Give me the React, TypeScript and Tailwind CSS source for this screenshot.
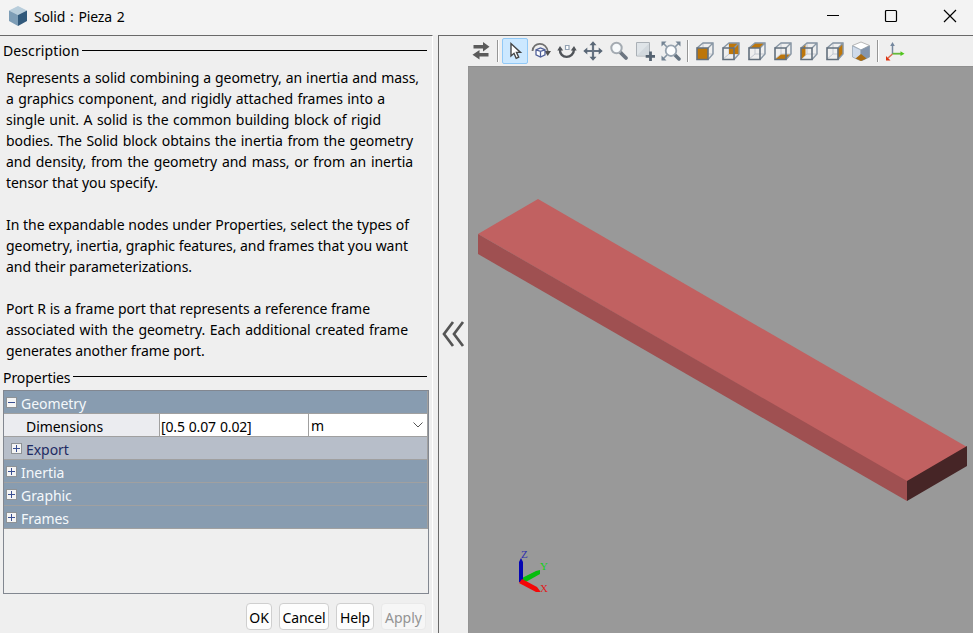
import type { ReactNode } from 'react';

const paragraphs: [string, string][][] = [
  [
    ['Represents a solid combining a geometry, an inertia and mass,', 'w-[413px]'],
    ['a graphics component, and rigidly attached frames into a', 'w-[379px]'],
    ['single unit. A solid is the common building block of rigid', 'w-[375px]'],
    ['bodies. The Solid block obtains the inertia from the geometry', 'w-[407px]'],
    ['and density, from the geometry and mass, or from an inertia', 'w-[407px]'],
    ['tensor that you specify.', 'w-[152px]'],
  ],
  [
    ['In the expandable nodes under Properties, select the types of', 'w-[403px]'],
    ['geometry, inertia, graphic features, and frames that you want', 'w-[402px]'],
    ['and their parameterizations.', 'w-[186px]'],
  ],
  [
    ['Port R is a frame port that represents a reference frame', 'w-[364px]'],
    ['associated with the geometry. Each additional created frame', 'w-[402px]'],
    ['generates another frame port.', 'w-[198px]'],
  ],
];

function Tool({ children, active = false }: { children: ReactNode; active?: boolean }) {
  return (
    <div
      className={`flex h-[26px] w-[26px] shrink-0 items-center justify-center rounded-[2px] ${
        active ? 'border border-[#91c9f7] bg-[#cce8ff]' : ''
      }`}
    >
      <svg width="20" height="20" viewBox="0 0 20 20" fill="none" className="shrink-0">
        {children}
      </svg>
    </div>
  );
}

function Separator() {
  return <div className="mx-[3px] h-[22px] w-[2px] shrink-0 border-r border-white bg-[#969696]" />;
}

function Cube({ face }: { face: string }) {
  return (
    <Tool>
      <path d="M8 2H18V13H8Z M1.5 18.5L8 13" stroke="#c3c8d0" strokeWidth="1" />
      <path d={face} fill="#bd760a" />
      <path d="M2 7L8 2H18V13L13 18.5M13 7L18 2" stroke="#8997a5" strokeWidth="1.4" />
      <path d="M2 7H13V18.5H2Z" stroke="#63707d" strokeWidth="1.6" />
    </Tool>
  );
}

function Toolbar() {
  return (
    <div className="flex h-[30px] items-center pl-[29px]">
      <Tool>
        <path d="M2.5 4h9.5V1l6.500 4.700-6.500 4.700V7.600H2.5zM17.500 12H8.500V9L1.500 13.800l7 4.700V15.600h9z" fill="#5b5b5b" />
      </Tool>
      <Separator />
      <Tool active>
        <path d="M6 2.500V15l3-2.700 2.200 5 2.500-1.100-2.200-4.800h4z" fill="#fff" stroke="#454545" strokeWidth="1.4" />
      </Tool>
      <Tool>
        <path d="M1.500 10C2 .5 15.500 0 17 11" stroke="#707070" strokeWidth="1.800" />
        <path d="M13.500 10h6.500l-3.300 5z" fill="#505050" />
        <path d="M5 8.800l4.500-1.800 4.500 1.800v5l-4.500 2.200-4.500-2.200zM5 8.800l4.500 1.500 4.500-1.500M9.500 10.300V16" fill="#fff" stroke="#51619a" strokeWidth="1.300" />
      </Tool>
      <Tool>
        <path d="M3 8C2 18.500 17 18.500 17 8" stroke="#505459" strokeWidth="2.4" />
        <path d="M.3 9.500L3 5l3.200 4.500zM13.800 9.500L17 5l2.700 4.500z" fill="#505459" />
        <path d="M8.500 4.500h3.500V8.500h-3.500z" fill="#fff" stroke="#93a2b3" strokeWidth="1.2" />
      </Tool>
      <Tool>
        <path d="M10 2v16M2 10h16" stroke="#667382" strokeWidth="2.200" />
        <path d="M6.500 4.300L10 .3 13.500 4.300zM6.500 15.700l3.500 4 3.500-4zM4.300 6.500L.3 10l4 3.500zM15.700 6.500l4 3.500-4 3.500z" fill="#596776" />
      </Tool>
      <Tool>
        <path d="M11.500 11.500l5.500 5.500" stroke="#6d7681" strokeWidth="3.800" strokeLinecap="round" />
        <circle cx="7.500" cy="7" r="5.200" fill="#f7fafc" stroke="#a4abb2" strokeWidth="2" />
      </Tool>
      <Tool>
        <path d="M1.500 1.500h13v13.500h-13z" fill="#dfe4e8" stroke="#aab0b6" />
        <path d="M2 14.500L14 2.500V14.500H2z" fill="#d3d9de" />
        <path d="M15.500 10.500v9.500M10.700 15.300h9.300" stroke="#566371" strokeWidth="2.800" />
      </Tool>
      <Tool>
        <path d="M2 2l4 4M18 2l-4 4M2 18l4-4M14 14l4 4" stroke="#8594a2" strokeWidth="1.600" />
        <path d="M.5 .5h5l-5 5zM19.500 .5h-5l5 5zM.5 19.500h5l-5-5z" fill="#748494" />
        <path d="M13.500 13.500l4.500 4.500" stroke="#657381" strokeWidth="3.500" strokeLinecap="round" />
        <circle cx="10" cy="9.700" r="5.300" fill="#fcfdfe" stroke="#97a3af" strokeWidth="1.800" />
      </Tool>
      <Separator />
      <Cube face="M2 7H13V18.5H2Z" />
      <Cube face="M8 2H18V13H8Z" />
      <Cube face="M2 7L8 2H18L13 7Z" />
      <Cube face="M2 18.5L8 13.5H18L13 18.5Z" />
      <Cube face="M2 7L6.5 3V14L2 18.5Z" />
      <Cube face="M13 7L18 2V13L13 18.5Z" />
      <Tool>
        <path d="M1.500 4.500L10 1l8.500 3.500L10 9z" fill="#fff" stroke="#a5a5a5" strokeWidth=".8" />
        <path d="M1.500 5L10 9v11l-8.500-4z" fill="#cfdaea" stroke="#9aa9b9" strokeWidth=".8" />
        <path d="M18.500 5L10 9v11l8.500-4z" fill="#8495ad" stroke="#8798aa" strokeWidth=".8" />
        <path d="M4.500 17.500L10 13l5.500 4.500L10 20z" fill="#aa6c12" />
      </Tool>
      <Separator />
      <Tool>
        <path d="M7.500 13V3" stroke="#74879e" strokeWidth="1.500" />
        <path d="M5.200 5l2.300-4L9.800 5z" fill="#74879e" />
        <path d="M7.500 12.700h9" stroke="#64b93a" strokeWidth="1.800" />
        <path d="M15.500 10.300l4 2.400-4 2.400z" fill="#50c51c" />
        <path d="M7.500 13L3 17" stroke="#d56d50" strokeWidth="1.500" />
        <path d="M1 15v4.500h4.500z" fill="#df3210" />
      </Tool>
    </div>
  );
}

function Heading({ title, size }: { title: string; size: string }) {
  return (
    <div className="flex h-[20px] items-center gap-[3px]">
      <span className={`${size} leading-[20px] whitespace-nowrap`}>{title}</span>
      <div className="-mt-[2px] h-px flex-1 bg-black" />
    </div>
  );
}

function Expander({ open = false }: { open?: boolean }) {
  return (
    <svg width="11" height="11" viewBox="0 0 11 11" className="shrink-0">
      <rect x=".5" y=".5" width="10" height="10" fill="#f4f4f4" stroke="#8e9296" />
      <path d={open ? 'M2 5.5h7' : 'M2 5.5h7M5.5 2v7'} stroke="#3a4f92" />
    </svg>
  );
}

function Group({ title, open = false, sub = false }: { title: string; open?: boolean; sub?: boolean }) {
  return (
    <div
      className={`flex h-[23px] items-center gap-[4px] border-b border-[#a0a0a0] ${
        sub ? 'bg-[#b7bec9] pl-[7px] text-[#1e2b63]' : 'bg-[#889cb0] pl-[2px] text-[#f4f8fb]'
      }`}
    >
      <div className="flex pt-px">
        <Expander open={open} />
      </div>
      <span className="pt-[2px] tracking-[-0.05px]">{title}</span>
    </div>
  );
}

export default function App() {
  return (
    <div className="flex h-[633px] w-[973px] flex-col overflow-hidden bg-[#efefef] font-['Noto_Sans','Open_Sans',sans-serif] text-[14px] leading-[21px] text-black">
      <header className="flex h-[35px] shrink-0 items-center bg-[#f3f3f3] pb-[3px] pl-[8px]">
        <svg width="20" height="22" viewBox="0 0 20 22">
          <path d="M1 5.500L10 1l9 4.500-9 4.600z" fill="#b8cddb" />
          <path d="M1 5.500l9 4.600V21l-9-5z" fill="#7d9db6" />
          <path d="M19 5.500l-9 4.600V21l9-5z" fill="#31597b" />
        </svg>
        <span className="ml-[6px] tracking-[-0.15px] [word-spacing:1.3px]">Solid : Pieza 2</span>
        <div className="ml-auto flex w-[148px] items-center justify-between pr-[16px]">
          <svg width="14" height="14"><path d="M2 6.500h12" stroke="#000" /></svg>
          <svg width="14" height="14"><rect x="1.500" y="1.500" width="11" height="11" rx="1" fill="none" stroke="#000" strokeWidth="1.200" /></svg>
          <svg width="14" height="14"><path d="M1 1l12 12M13 1L1 13" stroke="#000" strokeWidth="1.200" /></svg>
        </div>
      </header>
      <div className="flex min-h-0 flex-1">
        <section className="flex w-[433px] shrink-0 flex-col border-t border-r border-t-[#696969] border-r-white pl-[3px]">
          <div className="mt-[5px] pr-[5px]">
            <Heading title="Description" size="w-[76px] tracking-[0.1px]" />
          </div>
          <div className="mt-[6px] flex flex-col gap-[21px] pl-[3px]">
            {paragraphs.map((lines, i) => (
              <div key={i}>
                {lines.map(([text, width]) => (
                  <p
                    key={text}
                    className={`${width} h-[21px] tracking-[-0.05px] whitespace-nowrap [text-align-last:justify]`}
                  >
                    {text}
                  </p>
                ))}
              </div>
            ))}
          </div>
          <div className="mt-[6px] pr-[5px]">
            <Heading title="Properties" size="w-[67px] pt-px tracking-[-0.05px]" />
          </div>
          <div className="mt-[3px] h-[204px] w-[426px] border border-[#828790]">
            <div className="border-r border-[#a0a0a0]">
              <Group title="Geometry" open />
              <div className="flex h-[23px] items-center border-b border-[#a0a0a0] bg-white">
                <span className="h-[22px] w-[156px] border-r border-[#a0a0a0] bg-[#ebecf0] pt-[2px] pl-[22px] tracking-[-0.05px]">Dimensions</span>
                <span className="h-[22px] w-[149px] border-r border-[#a0a0a0] pt-[2px] pl-[1px] tracking-[-0.15px] [word-spacing:0.5px]">[0.5 0.07 0.02]</span>
                <span className="pl-[2px]">m</span>
                <svg width="10" height="6" className="mr-[4px] ml-auto"><path d="M.5 .5L5 5 9.500 .5" fill="none" stroke="#555" /></svg>
              </div>
              <Group title="Export" sub />
              <Group title="Inertia" />
              <Group title="Graphic" />
              <Group title="Frames" />
            </div>
          </div>
          <div className="mt-[9px] ml-[243px] flex h-[27px] gap-[7px]">
            {[
              ['OK', 'w-[26px]'],
              ['Cancel', 'w-[50px]'],
              ['Help', 'w-[38px]'],
            ].map(([label, width]) => (
              <button key={label} className={`${width} rounded-[4px] border border-[#cfcfcf] bg-[#fdfdfd] pt-[2px] tracking-[-0.1px]`}>
                {label}
              </button>
            ))}
            <button className="w-[45px] rounded-[4px] border border-[#e9e9e9] bg-[#f6f6f6] pt-[2px] text-[#939393]">Apply</button>
          </div>
        </section>
        <section className="ml-[5px] flex min-w-0 flex-1 flex-col border-t border-l border-[#696969]">
          <Toolbar />
          <div className="flex min-h-0 flex-1">
            <div className="flex w-[29px] shrink-0 justify-center pt-[254px]">
              <svg width="23" height="28" viewBox="0 0 23 28" fill="none" stroke="#555" strokeWidth="2.700">
                <path d="M11 2L2 14l9 12M21 2l-9 12 9 12" />
              </svg>
            </div>
            <div className="flex-1 bg-[#999]">
              <svg width="505" height="567" viewBox="468 66 505 567" className="block">
                <path d="M478 234L538 199 967 447 907 482Z" fill="#c16161" />
                <path d="M478 234L907 481V501L478 254Z" fill="#9f5051" />
                <path d="M907 481L967 446V466L907 501Z" fill="#462526" />
                <path d="M468 66V633M468 66.500H973" stroke="#8f8f8f" />
                <path d="M521 581L524 583 540 574 540 570 536 571 522 578Z" fill="#05bd0e" />
                <path d="M519 562L521 558 523 562V582H519Z" fill="#0505b3" />
                <path d="M519 583L522 579 537 587 540 591V592L536 592Z" fill="#f40808" />
                <g fontFamily="Liberation Serif" fontSize="11">
                  <text x="521" y="558" fill="#3030ad">Z</text>
                  <text x="540" y="570" fill="#10d21a">Y</text>
                  <text x="540" y="592" fill="#e02020">X</text>
                </g>
              </svg>
            </div>
          </div>
        </section>
      </div>
    </div>
  );
}
